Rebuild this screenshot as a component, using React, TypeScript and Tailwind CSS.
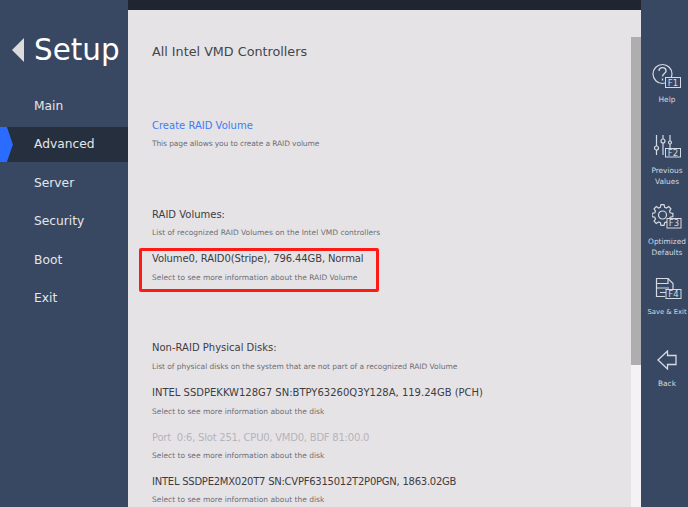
import type { ReactNode } from "react";

const navItems = ["Main", "Advanced", "Server", "Security", "Boot", "Exit"];
const INK = "#d5dae2";

function gearPath(cx: number, cy: number, outer: number, inner: number, teeth: number) {
  const pts: string[] = [];
  const step = (Math.PI * 2) / teeth;
  for (let i = 0; i < teeth; i++) {
    const a = i * step - Math.PI / 2;
    const offs: [number, number][] = [
      [-0.32, inner],
      [-0.17, outer],
      [0.17, outer],
      [0.32, inner],
    ];
    offs.forEach(([o, r]) => {
      const t = a + o * step * 1.1;
      pts.push(`${(cx + Math.cos(t) * r).toFixed(2)} ${(cy + Math.sin(t) * r).toFixed(2)}`);
    });
  }
  return `M${pts.join("L")}Z`;
}

function KeyBox({ x, y, w, h, label }: { x: number; y: number; w: number; h: number; label: string }) {
  return (
    <g>
      <rect x={x} y={y} width={w} height={h} fill="#394862" stroke={INK} strokeWidth="1" />
      <text
        x={x + w / 2}
        y={y + h / 2 + 3}
        textAnchor="middle"
        fontSize="8.5"
        fill={INK}
        stroke="none"
        fontFamily="DejaVu Sans"
      >
        {label}
      </text>
    </g>
  );
}

function HelpIcon() {
  return (
    <svg width="30" height="28" viewBox="0 0 30 28" fill="none" stroke={INK} strokeWidth="1.2">
      <circle cx="10.5" cy="11" r="9.5" />
      <path d="M7 8c0-4.5 7-4.5 7 0 0 2.5-3.5 2.5-3.5 5.5" strokeWidth="1.4" />
      <path d="M10.5 15.5v2" strokeWidth="1.4" />
      <KeyBox x={13.5} y={14.5} w={15} h={10} label="F1" />
    </svg>
  );
}

function SlidersIcon() {
  return (
    <svg width="30" height="28" viewBox="0 0 30 28" fill="none" stroke={INK} strokeWidth="1.2">
      <path d="M4.5 2v11M4.5 17v5M11 2v4M11 10v12M18 2v6M18 11v4" />
      <circle cx="4.5" cy="15" r="2" />
      <circle cx="11" cy="8" r="2" />
      <circle cx="18" cy="9.5" r="1.5" />
      <KeyBox x={13.5} y={15.5} w={15} h={8.5} label="F2" />
    </svg>
  );
}

function GearIcon() {
  return (
    <svg width="30" height="28" viewBox="0 0 30 28" fill="none" stroke={INK} strokeWidth="1.2">
      <path d={gearPath(10.5, 11, 10.5, 8, 8)} />
      <circle cx="10.5" cy="11" r="4" />
      <KeyBox x={15} y={14.5} w={14} h={9.5} label="F3" />
    </svg>
  );
}

function SaveIcon() {
  return (
    <svg width="30" height="28" viewBox="0 0 30 28" fill="none" stroke={INK} strokeWidth="1.2">
      <path d="M13 19.5H4.5V1.5H16l5 5v5.5" />
      <path d="M4.5 6.5H16V1.5M4.5 11H17M8 15.5h6" />
      <KeyBox x={14} y={12.5} w={15} h={9} label="F4" />
    </svg>
  );
}

function BackIcon() {
  return (
    <svg width="20" height="20" viewBox="0 0 20 20" fill="none" stroke={INK} strokeWidth="1.3">
      <path d="M1 10l9.5-9v4.5H19v9h-8.5V19z" />
    </svg>
  );
}

function ActionButton({
  icon,
  lines,
  className,
  labelClass,
}: {
  icon: ReactNode;
  lines: string[];
  className: string;
  labelClass: string;
}) {
  return (
    <div className={`flex flex-col items-center text-[7.4px] leading-[11px] text-[#d5dae2] ${className}`}>
      {icon}
      <div className={`flex flex-col items-center ${labelClass}`}>
        {lines.map((l) => (
          <span key={l} className="whitespace-nowrap">
            {l}
          </span>
        ))}
      </div>
    </div>
  );
}

function Item({
  title,
  desc,
  className,
  titleClass = "text-[#3d3d40]",
  descClass = "mt-[5px]",
}: {
  title: string;
  desc: string;
  className: string;
  titleClass?: string;
  descClass?: string;
}) {
  return (
    <div className={className}>
      <div className={`text-[10px] leading-[14px] whitespace-pre ${titleClass}`}>{title}</div>
      <div className={`text-[7.5px] leading-[11px] whitespace-nowrap text-[#6e6e72] ${descClass}`}>{desc}</div>
    </div>
  );
}

export default function App() {
  return (
    <div className="flex h-[507px] w-[688px] overflow-hidden bg-[#394862] font-['DejaVu_Sans',sans-serif]">
      <aside className="flex w-[128px] shrink-0 flex-col">
        <div className="mt-[33px] flex items-center pl-[12px]">
          <span className="mr-[10px] h-0 w-0 border-y-[12px] border-r-[12px] border-y-transparent border-r-[#dcdcdc]" />
          <span className="text-[29.4px] leading-[34px] text-white">Setup</span>
        </div>
        <nav className="mt-[21px] flex flex-col">
          {navItems.map((n) => (
            <div
              key={n}
              className={`relative mb-[3.5px] flex h-[35px] items-center pl-[34px] pt-[1px] text-[12.25px] text-[#e4e6ea] ${
                n === "Advanced" ? "bg-[#262f3e]" : ""
              }`}
            >
              {n === "Advanced" && (
                <svg className="absolute left-0 top-0" width="13" height="35" viewBox="0 0 13 35">
                  <rect width="13" height="35" fill="#394862" />
                  <path d="M0 0h7l6 17.5L7 35H0z" fill="#2a6cff" />
                  <path d="M7 0h6v35H7l6-17.5z" fill="#262f3e" />
                </svg>
              )}
              <span className="relative">{n}</span>
            </div>
          ))}
        </nav>
      </aside>

      <main className="flex w-[513px] shrink-0 flex-col">
        <div className="h-[10px] shrink-0 bg-[#1f2631]" />
        <div className="flex min-h-0 flex-1">
          <div className="relative w-[503px] overflow-hidden bg-[#e6e3e7] pl-[24px]">
            <div className="mt-[34px] text-[12.75px] leading-[15px] text-[#454548]">All Intel VMD Controllers</div>
            <Item
              title="Create RAID Volume"
              desc="This page allows you to create a RAID volume"
              className="mt-[60px]"
              titleClass="text-[#3d7bf5]"
              descClass="mt-[5px] tracking-[-0.11px]"
            />
            <Item
              title="RAID Volumes:"
              desc="List of recognized RAID Volumes on the Intel VMD controllers"
              className="mt-[59px]"
            />
            <Item
              title="Volume0, RAID0(Stripe), 796.44GB, Normal"
              desc="Select to see more information about the RAID Volume"
              className="mt-[14px]"
              titleClass="text-[#3d3d40] tracking-[-0.12px]"
              descClass="mt-[6px]"
            />
            <div className="absolute left-[11px] top-[238px] h-[44px] w-[240px] rounded-[2px] border-[3px] border-[#ff1a16]" />
            <Item
              title="Non-RAID Physical Disks:"
              desc="List of physical disks on the system that are not part of a recognized RAID Volume"
              className="mt-[58px]"
              descClass="mt-[6px] tracking-[-0.04px]"
            />
            <Item
              title="INTEL SSDPEKKW128G7 SN:BTPY63260Q3Y128A, 119.24GB (PCH)"
              desc="Select to see more information about the disk"
              className="mt-[14px]"
              descClass="mt-[6px]"
            />
            <Item
              title="Port  0:6, Slot 251, CPU0, VMD0, BDF 81:00.0"
              desc="Select to see more information about the disk"
              className="mt-[14px]"
              titleClass="text-[#b4b4b8] tracking-[-0.23px]"
            />
            <Item
              title="INTEL SSDPE2MX020T7 SN:CVPF6315012T2P0PGN, 1863.02GB"
              desc="Select to see more information about the disk"
              className="mt-[14px]"
              titleClass="text-[#3d3d40] tracking-[-0.24px]"
            />
          </div>
          <div className="flex w-[10px] flex-col bg-[#f4f2f4]">
            <div className="h-[27px] bg-[#e6e3e7]" />
            <div className="h-[328px] bg-[#aeaeae]" />
          </div>
        </div>
      </main>

      <aside className="w-[47px] shrink-0 bg-[#394862] pl-[5px]">
        <ActionButton icon={<HelpIcon />} lines={["Help"]} className="mt-[63px]" labelClass="mt-[2.5px]" />
        <ActionButton icon={<SlidersIcon />} lines={["Previous", "Values"]} className="mt-[28.5px]" labelClass="mt-[3.5px]" />
        <ActionButton icon={<GearIcon />} lines={["Optimized", "Defaults"]} className="mt-[17.5px]" labelClass="mt-[3.5px]" />
        <ActionButton icon={<SaveIcon />} lines={["Save & Exit"]} className="mt-[19.5px]" labelClass="mt-[1.5px] text-[6.8px]" />
        <ActionButton icon={<BackIcon />} lines={["Back"]} className="mt-[32.5px]" labelClass="mt-[7.5px]" />
      </aside>
    </div>
  );
}
